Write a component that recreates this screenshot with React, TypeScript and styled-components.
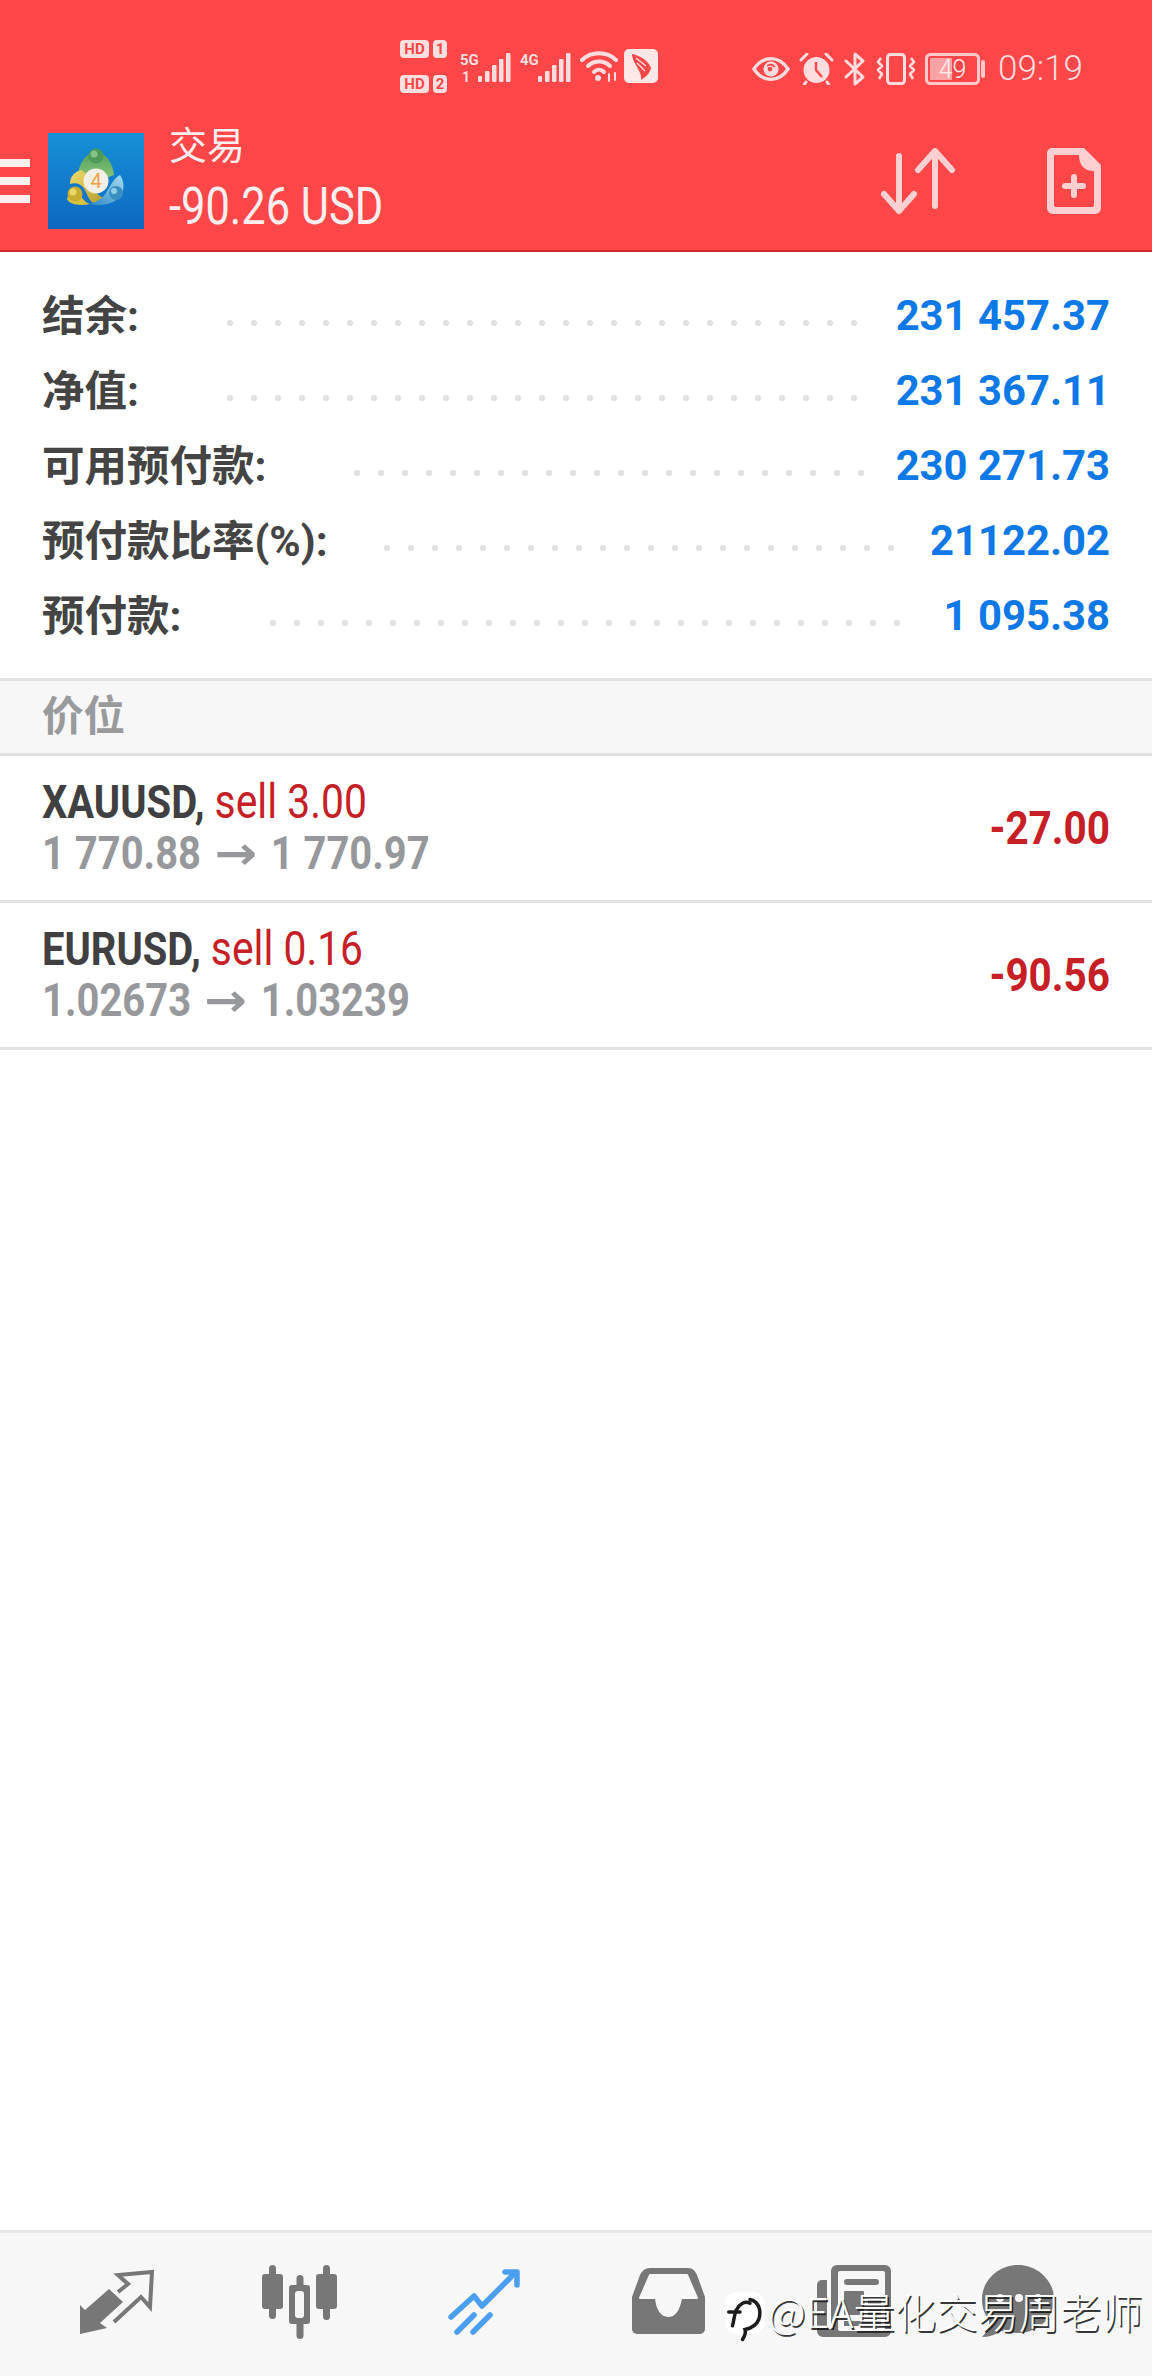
import React from "react";
import styled, { createGlobalStyle } from "styled-components";

const Global = createGlobalStyle`
  html, body { margin: 0; padding: 0; background: #fff; }
  body { font-family: Roboto, "Noto Sans CJK SC", sans-serif; }
  * { box-sizing: border-box; }
`;

const Page = styled.div`
  position: relative;
  width: 1152px;
  height: 2376px;
  display: flex;
  flex-direction: column;
  overflow: hidden;
  background: #fff;
`;

const Header = styled.header`
  background: #ff474a;
  border-bottom: 2px solid #c92a2e;
  color: #ffeeee;
`;

const StatusBar = styled.div`
  height: 112px;
  padding: 36px 69px 0 400px;
  display: flex;
  justify-content: space-between;
  align-items: flex-start;
`;

const StatusGroup = styled.div`
  display: flex;
  align-items: center;
  gap: 9px;
  height: 56px;
`;

const RightGroup = styled(StatusGroup)`
  height: 46px;
  margin-top: 10px;
  gap: 9px;
`;

const HdColumn = styled.div`
  display: flex;
  flex-direction: column;
  gap: 17px;
  width: 51px;
  margin-top: 5px;
`;

const HdRow = styled.div`
  display: flex;
  gap: 4px;
`;

const HdChip = styled.span<{ $w: number }>`
  height: 18px;
  width: ${(p) => p.$w}px;
  border-radius: 4px;
  background: #ffdfe0;
  color: #ff474a;
  font: 700 15px/18px Roboto, sans-serif;
  text-align: center;
`;

const Time = styled.span`
  font: 300 35px/46px Roboto, sans-serif;
  color: #ffdcdd;
  margin-left: 4px;
`;

const Toolbar = styled.div`
  height: 138px;
  display: flex;
  align-items: center;
  padding-right: 50px;
`;

const Hamburger = styled.div`
  width: 30px;
  display: flex;
  flex-direction: column;
  gap: 10px;
  & > i {
    display: block;
    height: 8px;
    background: #fff0f0;
  }
`;

const LogoBox = styled.svg`
  width: 96px;
  height: 96px;
  margin-left: 18px;
  flex: none;
`;

const TitleBlock = styled.div`
  margin-left: 25px;
  display: flex;
  flex-direction: column;
`;

const Title = styled.div`
  font: 400 38px/44px "Noto Sans CJK SC", sans-serif;
  height: 58px;
  margin-top: -6px;
`;

const Amount = styled.div`
  font: 400 52px/56px Roboto, sans-serif;
  transform: scaleX(0.835);
  transform-origin: left center;
  white-space: nowrap;
`;

const Actions = styled.div`
  margin-left: auto;
  display: flex;
  align-items: center;
  gap: 87px;
  padding-top: 3px;
`;

const SignalSvg = styled.svg`
  margin-top: 4px;
`;

const WifiSvg = styled.svg`
  margin-top: 4px;
`;

const WingSvg = styled.svg`
  margin: 4px 0 0 -4px;
`;

const FileSvg = styled.svg`
  margin-bottom: 4px;
`;

const Summary = styled.section`
  padding: 26px 42px 25px 42px;
  display: flex;
  flex-direction: column;
`;

const SummaryRow = styled.div`
  height: 75px;
  display: flex;
  align-items: center;
`;

const Label = styled.span<{ $w: number }>`
  width: ${(p) => p.$w}px;
  font: 700 42.5px/72px Roboto, "Noto Sans CJK SC", sans-serif;
  padding-top: 3px;
  color: #444;
  white-space: nowrap;
  flex: none;
`;

const Dots = styled.span<{ $w: number }>`
  width: ${(p) => p.$w}px;
  height: 6px;
  margin-top: 14px;
  background-image: radial-gradient(circle at 3px 3px, #e2e2e2 3px, transparent 3.4px);
  background-size: 24px 6px;
  background-repeat: repeat-x;
`;

const Value = styled.span`
  margin-left: auto;
  font: 700 41.8px/75px Roboto, sans-serif;
  color: #0d79e8;
  white-space: nowrap;
`;

const SectionHead = styled.div`
  height: 78px;
  background: #f7f7f7;
  border-top: 3px solid #e2e2e2;
  border-bottom: 3px solid #e2e2e2;
  padding-left: 42px;
  font: 700 41.5px/64px "Noto Sans CJK SC", sans-serif;
  color: #999a9c;
`;

const TradeRow = styled.div`
  height: 147px;
  border-bottom: 3px solid #e2e2e2;
  padding: 0 42px;
  display: flex;
  justify-content: space-between;
  align-items: center;
`;

const TradeInfo = styled.div`
  display: flex;
  flex-direction: column;
  transform: scaleX(0.85);
  transform-origin: left center;
  white-space: nowrap;
  margin-top: -3px;
`;

const Symbol = styled.div`
  font: 700 47px/51px Roboto, sans-serif;
  color: #404042;
`;

const Side = styled.span`
  font-size: 48px;
  font-weight: 400;
  color: #c62026;
`;

const Prices = styled.div`
  font: 700 47px/51px Roboto, sans-serif;
  color: #97989b;
`;

const PriceArrow = styled.span`
  display: inline-block;
  font: 700 46px/46px "DejaVu Sans", sans-serif;
  transform: scaleX(1.3);
  margin: 0 10px;
`;

const Profit = styled.div`
  font: 700 46px/52px Roboto, sans-serif;
  color: #c62026;
  transform: scaleX(0.88);
  transform-origin: right center;
`;

const Spacer = styled.div`
  flex: 1;
`;

const NavBar = styled.nav`
  height: 146px;
  border-top: 3px solid #e6e6e6;
  background: #f7f7f7;
  padding: 29px 0 0 24px;
  display: grid;
  grid-template-columns: repeat(5, 184px) 148px;
  align-items: start;
  justify-items: center;
`;

const Watermark = styled.div`
  position: absolute;
  left: 725px;
  top: 2286px;
  display: flex;
  align-items: flex-start;
  gap: 3px;
`;

const WaterBadge = styled.div`
  width: 40px;
  height: 42px;
  margin-top: 6px;
  border-radius: 12px;
  background: #fff;
  display: flex;
  align-items: flex-start;
  justify-content: center;
`;

const WaterText = styled.span`
  font: 300 41.3px/48px "Noto Sans CJK SC", sans-serif;
  color: #fff;
  text-shadow: 1.5px 1.5px 0.5px rgba(20, 20, 20, 0.85);
  white-space: nowrap;
`;

const ic = "#ffdcdd";

const Signal = ({ tag, sub }: { tag: string; sub?: string }) => (
  <SignalSvg width="51" height="35" viewBox="0 -3 51 35" fill={ic}>
    <text x="0" y="13" fontFamily="Roboto" fontWeight="700" fontSize="15">{tag}</text>
    {sub && <text x="2" y="30" fontFamily="Roboto" fontWeight="700" fontSize="14">{sub}</text>}
    <rect x="18" y="24" width="4" height="6" rx="1" />
    <rect x="25" y="19" width="4.5" height="11" rx="1" />
    <rect x="32" y="13" width="4.5" height="17" rx="1" />
    <rect x="39" y="7" width="4.5" height="23" rx="1" />
    <rect x="46" y="1" width="4.5" height="29" rx="1" />
  </SignalSvg>
);

const Wifi = () => (
  <WifiSvg width="39" height="32" viewBox="0 0 39 32" fill="none" stroke={ic} strokeWidth="4" strokeLinecap="round">
    <path d="M2 10C11 1 27 1 36 10" />
    <path d="M8 16C14 10 24 10 30 16" />
    <path d="M14 22C17 19 21 19 24 22" />
    <circle cx="18" cy="28" r="3" fill={ic} stroke="none" />
    <path d="M29 24v7M35 23v7" strokeWidth="2" />
  </WifiSvg>
);

const WingApp = () => (
  <WingSvg width="34" height="34" viewBox="0 0 34 34">
    <rect width="34" height="34" rx="5" fill="#ffe6e7" />
    <path d="M8 5C15 6 25 12 27 19C26 24 22 28 17 31C18 26 15 22 13 18C11 14 8 10 8 5Z" fill="#ff474a" />
    <path d="M12 9L22 17M13 14L21 22" stroke="#ffe6e7" strokeWidth="1.3" />
  </WingSvg>
);

const Eye = () => (
  <svg width="38" height="26" viewBox="0 0 40 26" fill="none">
    <path d="M2 13C8 4 14 2 20 2S32 4 38 13C32 22 26 24 20 24S8 22 2 13Z" stroke={ic} strokeWidth="3.5" />
    <circle cx="20" cy="13" r="8" fill={ic} />
    <path d="M16 10A5 5 0 0 1 24 11" stroke="#ff474a" strokeWidth="2" />
    <circle cx="19" cy="13" r="2.5" fill="#ff474a" />
  </svg>
);

const Alarm = () => (
  <svg width="35" height="32" viewBox="0 0 35 32" fill="none">
    <circle cx="17.5" cy="17" r="13" fill={ic} />
    <path d="M17 9V17L23 24" stroke="#ff474a" strokeWidth="2.4" />
    <path d="M2 7L8 1M33 7L27 1M7 29L5 32M28 29L30 32" stroke={ic} strokeWidth="3" strokeLinecap="round" />
  </svg>
);

const Bluetooth = () => (
  <svg width="24" height="34" viewBox="0 0 24 34" fill="none" stroke={ic} strokeWidth="3" strokeLinejoin="round" strokeLinecap="round">
    <path d="M3 9L20 25L12 32V2L20 9L3 25" />
  </svg>
);

const Vibrate = () => (
  <svg width="40" height="32" viewBox="0 0 40 32" fill="none" stroke={ic}>
    <rect x="11.5" y="1.5" width="17" height="29" rx="3" strokeWidth="3" />
    <path d="M5 5L2 9L6 13L2 17L6 21L3 26M35 5L38 9L34 13L38 17L34 21L37 26" strokeWidth="2.6" strokeLinejoin="round" />
  </svg>
);

const Battery = () => (
  <svg width="60" height="32" viewBox="0 0 60 32">
    <rect x="1.5" y="1.5" width="52" height="29" rx="4" fill="none" stroke="#ffc8ca" strokeWidth="3" />
    <rect x="5" y="5" width="22" height="22" rx="1" fill="#ffa3a6" />
    <text x="27.5" y="25" textAnchor="middle" fontFamily="Roboto" fontSize="25" fontWeight="300" fill="#ffeeee">49</text>
    <rect x="56" y="7" width="4" height="18" rx="2" fill="#ffc8ca" />
  </svg>
);

const Mt4Logo = () => (
  <LogoBox viewBox="0 0 96 96">
    <defs>
      <linearGradient id="mtBg" x1="0" y1="0" x2="0" y2="1">
        <stop offset="0" stopColor="#1790d8" />
        <stop offset="1" stopColor="#0d68c0" />
      </linearGradient>
      <linearGradient id="mtGreen" x1="0" y1="0" x2="0" y2="1">
        <stop offset="0" stopColor="#4f9f5a" />
        <stop offset="1" stopColor="#8cc67a" />
      </linearGradient>
      <linearGradient id="mtYellow" x1="0" y1="0" x2="1" y2="1">
        <stop offset="0" stopColor="#efdc6c" />
        <stop offset="1" stopColor="#b59c2c" />
      </linearGradient>
      <linearGradient id="mtBlue" x1="1" y1="0" x2="0" y2="1">
        <stop offset="0" stopColor="#a6dcf0" />
        <stop offset="1" stopColor="#2d88c4" />
      </linearGradient>
    </defs>
    <rect width="96" height="96" fill="url(#mtBg)" />
    <path d="M48 18C58 20 65 30 66 42C63 43 60 44 57 47L39 47C36 44 33 43 30 42C31 30 38 20 48 18Z" fill="url(#mtGreen)" />
    <path d="M33 37C26 39 22 44 22 51C28 49 34 51 37 57C40 63 41 68 47 71L56 65C48 62 43 54 41 46C39 42 37 39 33 37Z" fill="url(#mtYellow)" />
    <path d="M19 66C22 72 32 73 42 71C36 69 33 64 31 58C27 57 21 60 19 66Z" fill="#d9c240" />
    <path d="M72 42C76 48 77 56 73 62C67 71 53 74 41 71C50 69 56 64 59 58C63 52 66 45 72 42Z" fill="url(#mtBlue)" />
    <circle cx="48" cy="23" r="7.5" fill="#4d9a58" />
    <circle cx="46" cy="21" r="3.5" fill="#86c486" />
    <circle cx="27" cy="61" r="7.5" fill="#c7ae30" />
    <circle cx="25" cy="59" r="3.5" fill="#ecd964" />
    <circle cx="68" cy="60" r="7" fill="#3a8fc0" />
    <circle cx="66" cy="58" r="3" fill="#8fcfe8" />
    <circle cx="48" cy="48" r="12.5" fill="#f4efe4" />
    <text x="48" y="55" textAnchor="middle" fontFamily="Roboto" fontSize="20" fontWeight="400" fill="#eea24a">4</text>
  </LogoBox>
);

const SortIcon = () => (
  <svg width="80" height="70" viewBox="0 0 80 70" fill="none" stroke="#ffd0d2" strokeWidth="6" strokeLinecap="round" strokeLinejoin="round">
    <path d="M20 8V63M5 46L20 63L35 46" />
    <path d="M56 58V3M39 22L56 3L73 22" />
  </svg>
);

const FileIcon = () => (
  <FileSvg width="56" height="68" viewBox="0 0 56 68">
    <path d="M6 1H38L55 18V61A6 6 0 0 1 49 67H7A6 6 0 0 1 1 61V6A5 5 0 0 1 6 1Z" fill="#ffd0d2" />
    <path d="M8 8H33C33 18 38 24 48 24V58C48 59 47 60 46 60H10C9 60 8 59 8 58Z" fill="#ff474a" />
    <path d="M28 30V48M19 39H37" stroke="#ffd0d2" strokeWidth="6" strokeLinecap="round" />
  </FileSvg>
);

const g = "#777777";
const bg = "#f7f7f7";

const NavTrade = () => (
  <svg width="80" height="80" viewBox="76 2262 80 80">
    <path d="M80 2305L85 2310L109 2289L123 2302L100 2323L107 2328L80 2334Z" fill={g} strokeLinejoin="round" />
    <path d="M118 2292L128 2284L118 2275L152 2272L150 2307L141 2297L114 2322" fill="none" stroke={g} strokeWidth="4" />
  </svg>
);

const NavCharts = () => (
  <svg width="80" height="80" viewBox="260 2262 80 80" fill={g}>
    <rect x="262" y="2274" width="21" height="35" rx="3" />
    <rect x="269" y="2265" width="7" height="54" rx="3.5" />
    <rect x="316" y="2274" width="21" height="35" rx="3" />
    <rect x="323" y="2265" width="7" height="55" rx="3.5" />
    <rect x="296.5" y="2275" width="7" height="64" rx="3.5" />
    <rect x="289" y="2285" width="21" height="39" rx="3" />
    <rect x="295" y="2291" width="9" height="27" rx="3" fill={bg} />
  </svg>
);

const NavHistory = () => (
  <svg width="80" height="80" viewBox="444 2262 80 80" fill="none" stroke="#4a9ff0" strokeWidth="5.5" strokeLinecap="round" strokeLinejoin="round">
    <path d="M451 2317L474 2296L482 2306L515 2273" />
    <path d="M505 2272H517V2285" />
    <path d="M457 2332L474 2315M473 2332L490 2315" />
  </svg>
);

const NavInbox = () => (
  <svg width="80" height="80" viewBox="628 2262 80 80">
    <path d="M650 2268H688C693 2268 695 2271 697 2275L705 2297V2329A5 5 0 0 1 700 2334H637A5 5 0 0 1 632 2329V2297L640 2275C642 2271 645 2268 650 2268Z" fill={g} />
    <path d="M650 2275H687L697 2298H681C679 2310 674 2316 668 2316C662 2316 657 2310 656 2298H640Z" fill={bg} strokeLinejoin="round" stroke={bg} strokeWidth="2" />
  </svg>
);

const NavNews = () => (
  <svg width="80" height="80" viewBox="812 2262 80 80">
    <path d="M837 2265H885A6 6 0 0 1 891 2271V2331A6 6 0 0 1 885 2337H823A6 6 0 0 1 817 2331V2285A5 5 0 0 1 822 2280H827V2326A3 3 0 0 0 833 2326H831V2271A6 6 0 0 1 837 2265Z" fill={g} />
    <rect x="838" y="2271" width="47" height="60" rx="2" fill={bg} />
    <rect x="844" y="2279" width="35" height="6" rx="3" fill={g} />
    <rect x="844" y="2291" width="20" height="24" rx="1" fill={g} />
    <rect x="868" y="2300" width="13" height="5" fill={g} />
    <rect x="868" y="2310" width="13" height="5" fill={g} />
    <rect x="844" y="2321" width="37" height="5" fill={g} />
  </svg>
);

const NavChat = () => (
  <svg width="80" height="80" viewBox="978 2262 80 80">
    <path d="M1018 2265C1038 2265 1054 2281 1054 2299C1054 2318 1038 2333 1018 2333C1011 2333 1005 2331 1001 2331C995 2335 989 2337 982 2337C987 2332 990 2326 989 2320C984 2314 982 2307 982 2299C982 2281 998 2265 1018 2265Z" fill={g} />
    <circle cx="1000" cy="2298" r="4" fill={bg} />
    <circle cx="1019" cy="2298" r="4" fill={bg} />
    <circle cx="1038" cy="2298" r="4" fill={bg} />
  </svg>
);

const WaterMark = () => (
  <svg width="38" height="50" viewBox="0 0 30 40" fill="none" stroke="#1c1c1c" strokeWidth="2.8" strokeLinecap="round">
    <path d="M5 27C7 20 6 13 13 9C15 8 17 8 19 9" />
    <path d="M2 16H11" />
    <path d="M19 6C27 8 28 16 26 22C24 27 20 29 15 30C16 33 15 35 13 38" />
  </svg>
);

const summary = [
  { label: "结余:", value: "231 457.37", lw: 185, dw: 630 },
  { label: "净值:", value: "231 367.11", lw: 185, dw: 630 },
  { label: "可用预付款:", value: "230 271.73", lw: 312, dw: 514 },
  { label: "预付款比率(%):", value: "21122.02", lw: 342, dw: 510 },
  { label: "预付款:", value: "1 095.38", lw: 228, dw: 630 },
];

const trades = [
  { sym: "XAUUSD,", side: "sell 3.00", from: "1 770.88", to: "1 770.97", profit: "-27.00" },
  { sym: "EURUSD,", side: "sell 0.16", from: "1.02673", to: "1.03239", profit: "-90.56" },
];

export default function App() {
  return (
    <Page>
      <Global />
      <Header>
        <StatusBar>
          <StatusGroup>
            <HdColumn>
              <HdRow><HdChip $w={29}>HD</HdChip><HdChip $w={14}>1</HdChip></HdRow>
              <HdRow><HdChip $w={29}>HD</HdChip><HdChip $w={14}>2</HdChip></HdRow>
            </HdColumn>
            <Signal tag="5G" sub="1" />
            <Signal tag="4G" />
            <Wifi />
            <WingApp />
          </StatusGroup>
          <RightGroup>
            <Eye />
            <Alarm />
            <Bluetooth />
            <Vibrate />
            <Battery />
            <Time>09:19</Time>
          </RightGroup>
        </StatusBar>
        <Toolbar>
          <Hamburger><i /><i /><i /></Hamburger>
          <Mt4Logo />
          <TitleBlock>
            <Title>交易</Title>
            <Amount>-90.26 USD</Amount>
          </TitleBlock>
          <Actions>
            <SortIcon />
            <FileIcon />
          </Actions>
        </Toolbar>
      </Header>
      <Summary>
        {summary.map((s) => (
          <SummaryRow key={s.label}>
            <Label $w={s.lw}>{s.label}</Label>
            <Dots $w={s.dw} />
            <Value>{s.value}</Value>
          </SummaryRow>
        ))}
      </Summary>
      <SectionHead>价位</SectionHead>
      {trades.map((t) => (
        <TradeRow key={t.sym}>
          <TradeInfo>
            <Symbol>{t.sym} <Side>{t.side}</Side></Symbol>
            <Prices>{t.from} <PriceArrow>→</PriceArrow> {t.to}</Prices>
          </TradeInfo>
          <Profit>{t.profit}</Profit>
        </TradeRow>
      ))}
      <Spacer />
      <NavBar>
        <NavTrade />
        <NavCharts />
        <NavHistory />
        <NavInbox />
        <NavNews />
        <NavChat />
      </NavBar>
      <Watermark>
        <WaterBadge><WaterMark /></WaterBadge>
        <WaterText>@EA量化交易周老师</WaterText>
      </Watermark>
    </Page>
  );
}
